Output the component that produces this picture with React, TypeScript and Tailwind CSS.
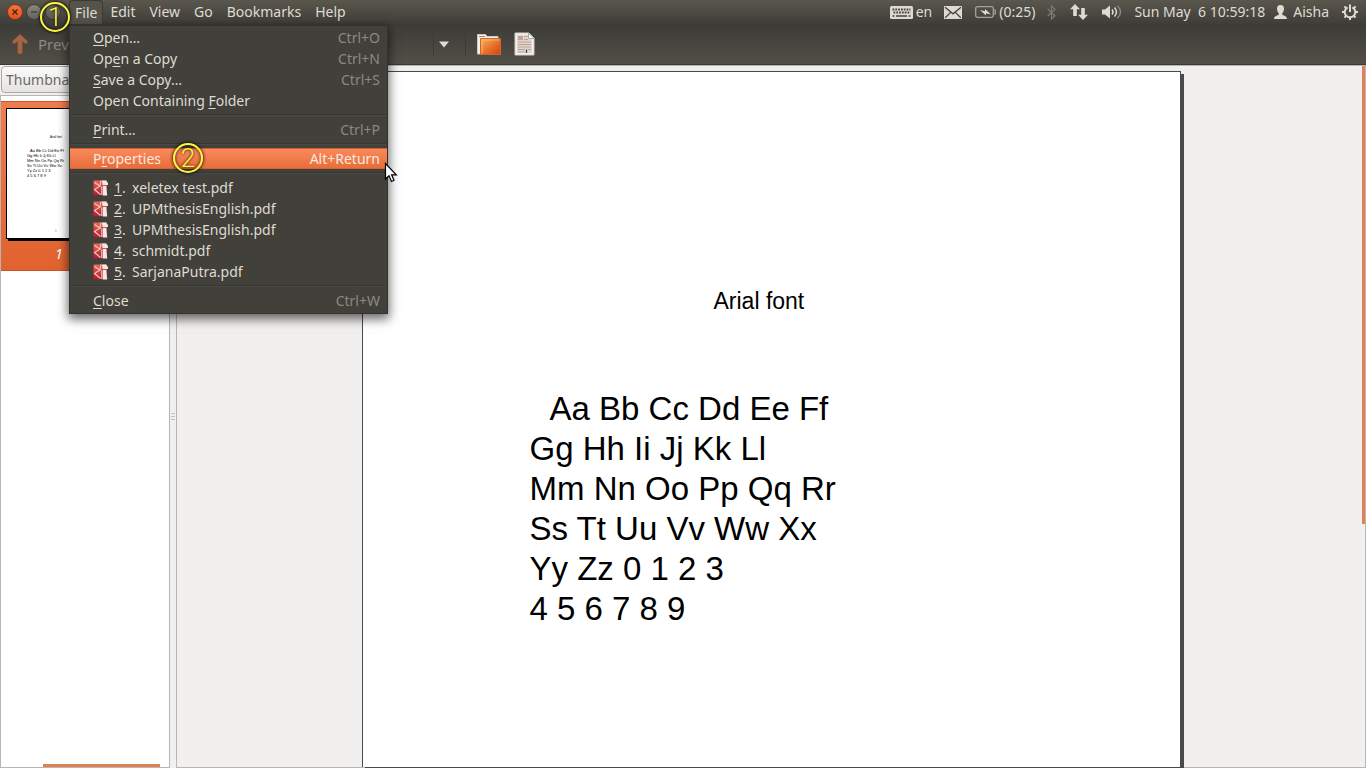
import React from 'react';

interface MenuEntry {
  before?: string;
  key: string;
  after: string;
  shortcut?: string;
  pdf?: boolean;
  active?: boolean;
}

const menuBar = ['File', 'Edit', 'View', 'Go', 'Bookmarks', 'Help'];

const fileMenu: MenuEntry[][] = [
  [
    { key: 'O', after: 'pen…', shortcut: 'Ctrl+O' },
    { before: 'Op', key: 'e', after: 'n a Copy', shortcut: 'Ctrl+N' },
    { key: 'S', after: 'ave a Copy…', shortcut: 'Ctrl+S' },
    { before: 'Open Containing ', key: 'F', after: 'older' },
  ],
  [{ key: 'P', after: 'rint…', shortcut: 'Ctrl+P' }],
  [{ before: 'P', key: 'r', after: 'operties', shortcut: 'Alt+Return', active: true }],
  [
    { key: '1', after: 'xeletex test.pdf', pdf: true },
    { key: '2', after: 'UPMthesisEnglish.pdf', pdf: true },
    { key: '3', after: 'UPMthesisEnglish.pdf', pdf: true },
    { key: '4', after: 'schmidt.pdf', pdf: true },
    { key: '5', after: 'SarjanaPutra.pdf', pdf: true },
  ],
  [{ key: 'C', after: 'lose', shortcut: 'Ctrl+W' }],
];

const sampleLines = [
  'Gg Hh Ii Jj Kk Ll',
  'Mm Nn Oo Pp Qq Rr',
  'Ss Tt Uu Vv Ww Xx',
  'Yy Zz 0 1 2 3',
  '4 5 6 7 8 9',
];

const PdfIcon = () => (
  <svg width="15" height="16" viewBox="0 0 15 16" className="shrink-0">
    <defs>
      <linearGradient id="pdf" x1="0" y1="0" x2="0" y2="1">
        <stop offset="0" stopColor="#ee6a58" />
        <stop offset="1" stopColor="#b3182c" />
      </linearGradient>
    </defs>
    <rect x="0.5" y="0.5" width="13.5" height="15" rx="0.5" fill="url(#pdf)" />
    <path d="M1.500 2.500L7 6L8 0.500M7 6L1.500 9.500L7.500 14.500" fill="none" stroke="#f6c9c4" strokeWidth="1.100" />
    <path d="M8 6l1.500 1V15H8z" fill="#e3a9a9" />
    <path d="M9 0.500h4l2 2.500v2H9.600z" fill="#e9e9e6" />
    <path d="M10 6h3.200l1 9.500H9.800z" fill="#eeeae8" />
  </svg>
);

const KeyboardIcon = () => (
  <svg width="23" height="13" viewBox="0 0 23 13">
    <rect width="23" height="13" rx="1.5" fill="#dfdbd2" />
    <path d="M2.5 3.5h18M3.5 6.5h17" stroke="#45433d" strokeWidth="1.8" strokeDasharray="1.8 1" />
    <path d="M2.5 10h2M6 10h11M18.500 10h2" stroke="#45433d" strokeWidth="1.6" />
  </svg>
);

const MailIcon = () => (
  <svg width="18" height="13" viewBox="0 0 18 13">
    <rect width="18" height="13" rx="0.5" fill="#dfdbd2" />
    <path d="M1 1.200L9 7.800L17 1.200M1.200 11.800L6.400 6.600M16.800 11.800L11.600 6.600" fill="none" stroke="#45433d" strokeWidth="1.3" />
  </svg>
);

const BatteryIcon = () => (
  <svg width="21" height="12" viewBox="0 0 21 12">
    <rect x="0.7" y="0.7" width="17.600" height="10.600" rx="1.800" fill="none" stroke="#a5a29b" strokeWidth="1.3" />
    <path d="M18.500 4h1.800v4h-1.800" fill="none" stroke="#a5a29b" strokeWidth="1.2" />
    <path d="M5 4l5 1.200V3l6 5.500-5-1.200v2.200z" fill="#dfdbd2" />
  </svg>
);

const BluetoothIcon = () => (
  <svg width="9" height="15" viewBox="0 0 9 15">
    <path d="M0.700 4L8 10.800L4.500 14V1L8 4.200L0.700 11" fill="none" stroke="#7d7a73" strokeWidth="1.2" />
  </svg>
);

const NetworkIcon = () => (
  <svg width="18" height="16" viewBox="0 0 18 16">
    <path d="M5 0l5 5.200H6.800V12H3.200V5.200H0z" fill="#dfdbd2" />
    <path d="M13 16l-5-5.200h3.200V4h3.600v6.800H18z" fill="#dfdbd2" />
  </svg>
);

const VolumeIcon = () => (
  <svg width="20" height="14" viewBox="0 0 20 14">
    <path d="M0 4.500h3L8 0.500v13L3 9.500H0z" fill="#dfdbd2" />
    <path d="M10 4.500q2 2.500 0 5M12.500 2.500q4 4.500 0 9" fill="none" stroke="#dfdbd2" strokeWidth="1.5" />
    <path d="M15.500 0.800q6 6.200 0 12.400" fill="none" stroke="#8b8881" strokeWidth="1.4" />
  </svg>
);

const UserIcon = () => (
  <svg width="13" height="14" viewBox="0 0 13 14">
    <path d="M6.500 0C9 0 10 1.500 10 3.800S9 7.500 8.200 8.500v1.200c1 .8 4.800 1 4.800 4.300H0c0-3.300 3.800-3.500 4.800-4.300V8.500C4 7.500 3 6 3 3.800S4 0 6.500 0z" fill="#dfdbd2" />
  </svg>
);

const PowerIcon = () => (
  <svg width="16" height="16" viewBox="0 0 16 16" fill="none" stroke="#dfdbd2">
    <path
      d="M8 13.500V16M2.500 8H0M13.500 8H16M4.100 11.900L2.400 13.600M11.900 11.900L13.600 13.600M4.100 4.100L2.400 2.400M11.900 4.100L13.600 2.400"
      strokeWidth="2"
    />
    <path d="M5.600 3.300A5.300 5.300 0 1 0 10.400 3.300" strokeWidth="2" />
    <path d="M8 0.500V8" strokeWidth="2" />
  </svg>
);

const UpArrow = () => (
  <svg width="18" height="22" viewBox="0 0 18 22">
    <path d="M9 1.200L17 8.500L15 11.200L11.300 8.200V19.500Q11.300 21 9.800 21H8.200Q6.700 21 6.700 19.500V8.200L3 11.200L1 8.500z" fill="#a06a4a" stroke="#8c4c2f" />
  </svg>
);

const FolderIcon = () => (
  <svg width="26" height="24" viewBox="0 0 26 24">
    <defs>
      <linearGradient id="folder" x1="0" y1="0" x2="1" y2="1">
        <stop offset="0" stopColor="#f6b65c" />
        <stop offset="0.5" stopColor="#e8762c" />
        <stop offset="1" stopColor="#d5400c" />
      </linearGradient>
    </defs>
    <path d="M1.500 2.500h8l1.500 2h11v17.500H1.500z" fill="#f4f1ee" stroke="#cfc8c1" />
    <path d="M3 4.500h6" stroke="#c9785a" />
    <path d="M4.500 6.500h20V22.500H4.500z" fill="url(#folder)" stroke="#d0652f" />
    <path d="M6 21.500V8h17" fill="none" stroke="#f7c489" strokeOpacity="0.700" />
  </svg>
);

const DocumentIcon = () => (
  <svg width="22" height="24" viewBox="0 0 22 24">
    <path d="M1 1h14l5 5v17H1z" fill="#f3f1ef" stroke="#d2cecb" />
    <path d="M3 3h11v4h4v14H3z" fill="#e0d6cf" />
    <path d="M14.500 1v5.500H20z" fill="#fff" stroke="#aaa6a2" />
    <path d="M4 4h5v4H4z" fill="#c0a698" />
    <path d="M10 4.500h3.500M10 7.500h4M4 10h13M4 12.500h13M4 15h13M4 17.500h7M4 20h7M14 17.500h3" stroke="#bda395" strokeWidth="1.100" />
    <path d="M12.500 17.500v3.500" stroke="#4a4541" strokeWidth="1.300" />
  </svg>
);

// Yellow numbered ring laid over the screen
const Marker = ({ label }: { label: string }) => (
  <span className="flex size-[30px] items-center justify-center rounded-full border-2 border-[#fcf53c] font-[Roboto,sans-serif] text-[26px] leading-none font-light text-[#fcf53c] shadow-[0_0_3px_1px_#000a,inset_0_0_3px_1px_#0008] [text-shadow:0_0_3px_#000]">
    {label}
  </span>
);

const FileMenu = () => (
  <div className="absolute top-full left-0 z-10 mt-px w-[319px] border border-[#33322d] bg-[#41403a] pt-px pb-[2px] text-[#dfdbd2] shadow-[0_4px_10px_1px_#0009]">
    {fileMenu.map((group, i) => (
      <div key={i}>
        {i > 0 && <div className="my-[3px] h-[2px] border-t border-[#37362f] bg-[#4a4943]" />}
        {group.map(entry => (
          <button
            key={entry.key}
            className={
              entry.active
                ? 'relative flex h-[21px] w-full items-center border-y border-[#d4602f] bg-linear-to-b from-[#f98a5b] to-[#e86d39] pr-[7px] pl-[23px] text-[#fbe9df]'
                : 'flex h-[21px] w-full items-center pr-[7px] pl-[23px]'
            }
          >
            {entry.pdf && <PdfIcon />}
            {entry.pdf ? (
              <>
                <span className="ml-[6px] w-[18px] text-left"><u className="underline-offset-2">{entry.key}</u>.</span>
                <span>{entry.after}</span>
              </>
            ) : (
              <span className="whitespace-pre">{entry.before}<u className="underline-offset-2">{entry.key}</u>{entry.after}</span>
            )}
            {entry.active && (
              <span className="absolute top-[-6px] left-[103px]"><Marker label="2" /></span>
            )}
            {entry.shortcut && (
              <span className={entry.active ? 'ml-auto' : 'ml-auto text-[#8b8982]'}>{entry.shortcut}</span>
            )}
          </button>
        ))}
      </div>
    ))}
    <svg width="14" height="22" viewBox="0 0 14 22" className="absolute top-[136px] left-[314px]">
      <path d="M1.500 1.500V17L5 13.700L7.500 19.500L10 18.300L7.600 12.800H12.300z" fill="#fff" stroke="#000" strokeWidth="1.200" />
    </svg>
  </div>
);

const TopPanel = () => (
  <header className="relative flex h-6 items-center bg-linear-to-b from-[#5a574d] to-[#3e3d38] text-[#dfdbd2]">
    <div className="flex w-[69px] items-center gap-[3px] pl-[7px]">
      <button aria-label="Close window" className="flex size-4 items-center justify-center rounded-full border border-[#8a3512] bg-linear-to-b from-[#f4743f] to-[#e2531b]">
        <svg width="6" height="6" viewBox="0 0 6 6"><path d="M0.500 0.500l5 5M5.500 0.500l-5 5" stroke="#4b1d0b" strokeWidth="1.300" /></svg>
      </button>
      <button aria-label="Minimize window" className="flex size-4 items-center justify-center rounded-full border border-[#3c3b37] bg-linear-to-b from-[#8b887e] to-[#65635b]">
        <svg width="6" height="2" viewBox="0 0 6 2"><path d="M0 1h6" stroke="#3c3b37" strokeWidth="1.300" /></svg>
      </button>
      <button aria-label="Maximize window" className="size-4 rounded-full border border-[#3c3b37] bg-linear-to-b from-[#77746b] to-[#5a5850]" />
    </div>
    <span className="absolute top-[2px] left-10 z-20"><Marker label="1" /></span>
    <nav className="relative flex h-full items-center">
      {menuBar.map(name => (
        <button
          key={name}
          className={
            name === 'File'
              ? 'h-full rounded-t border-x border-t border-[#3a3934] bg-[#55534a] px-[5px]'
              : 'h-full px-[7px]'
          }
        >
          {name}
        </button>
      ))}
      <FileMenu />
    </nav>
    <div className="ml-auto flex items-center pr-2">
      <KeyboardIcon />
      <span className="mr-3 ml-[3px]">en</span>
      <MailIcon />
      <span className="ml-[13px]"><BatteryIcon /></span>
      <span className="mr-3 ml-[3px]">(0:25)</span>
      <BluetoothIcon />
      <span className="mx-[14px]"><NetworkIcon /></span>
      <VolumeIcon />
      <span className="mr-[9px] ml-3 whitespace-pre">Sun May  6 10:59:18</span>
      <UserIcon />
      <span className="mr-[13px] ml-[6px]">Aisha</span>
      <PowerIcon />
    </div>
  </header>
);

const Toolbar = () => (
  <div className="flex h-[41px] items-center border-b border-[#3a3934] bg-linear-to-b from-[#3c3b37] to-[#524f47]">
    <button aria-label="Previous page" className="flex w-[433px] items-center gap-[9px] pl-[11px] text-[15px] text-[#8b8982]">
      <UpArrow />
      Prev
    </button>
    <button aria-label="Zoom" className="flex h-[22px] w-8 items-center border-l border-[#3a3934] pl-[5px]">
      <svg width="10" height="7" viewBox="0 0 10 7"><path d="M0 0.500h10L5 6.500z" fill="#dfdbd2" /></svg>
    </button>
    <div className="flex h-[22px] items-center gap-3 border-l border-[#3a3934] pl-[10px]">
      <button aria-label="Open folder"><FolderIcon /></button>
      <button aria-label="Document"><DocumentIcon /></button>
    </div>
  </div>
);

const Sidebar = () => (
  <aside className="flex w-[170px] flex-col">
    <div className="px-px pt-px">
      <button aria-label="Thumbnails" className="flex h-[27px] w-full items-center rounded-sm border border-[#aaa8a2] bg-linear-to-b from-[#fafafa] to-[#e4e3e1] px-1 text-[#6b6965]">
        Thumbna
      </button>
    </div>
    <div className="relative mt-[2px] flex flex-1 flex-col border border-[#b8b6b0] bg-white pt-[5px]">
      <div className="flex h-[170px] flex-col border-y border-[#c9552a] bg-linear-to-b from-[#f07c4c] to-[#e0622f] px-[5px] pt-[6px]">
        <div className="flex h-[131px] w-[102px] flex-col border border-black bg-white pl-[20px] font-['Liberation_Sans',sans-serif] text-[4px] leading-[5px] text-black shadow-[2px_2px_0_#000]">
          <p className="mt-[26px] ml-[23px] text-[3px]">Arial font</p>
          <p className="mt-2 ml-[3px]">Aa Bb Cc Dd Ee Ff</p>
          {sampleLines.map(line => <p key={line}>{line}</p>)}
          <p className="mt-auto mb-1 ml-7 text-[3px] text-gray-500">1</p>
        </div>
        <span className="mt-[5px] ml-[49px] text-white italic">1</span>
      </div>
      <div className="absolute bottom-0 left-[42px] h-[3px] w-[117px] bg-[#df8058]" />
    </div>
  </aside>
);

const App: React.FC = () => {
  return (
    <div className="flex h-screen flex-col overflow-hidden bg-[#f1f0ee] font-['Noto_Sans',sans-serif] text-sm leading-5">
      <TopPanel />
      <Toolbar />
      <div className="flex min-h-0 flex-1">
        <Sidebar />
        <div className="flex w-[6px] flex-col items-center justify-center gap-[2px]">
          <i className="h-px w-1 bg-[#c4c2bd]" />
          <i className="h-px w-1 bg-[#c4c2bd]" />
          <i className="h-px w-1 bg-[#c4c2bd]" />
        </div>
        <main className="relative flex min-w-0 flex-1 justify-center border border-[#b8b6b0] px-4 pt-[5px]">
          <article className="flex w-[819px] flex-col border border-b-0 border-[#4a4a4a] bg-white px-[167px] pt-[215px] font-['Liberation_Sans',sans-serif] text-black shadow-[3px_3px_0_#4a4a4a]">
            <h1 className="ml-[184px] text-[23px] leading-7">Arial font</h1>
            <div className="mt-[74px] text-[33px] leading-10">
              <p className="ml-5">Aa Bb Cc Dd Ee Ff</p>
              {sampleLines.map(line => <p key={line}>{line}</p>)}
            </div>
          </article>
          <div className="absolute top-0 right-0 h-[458px] w-[3px] bg-[#df8058]" />
        </main>
      </div>
    </div>
  );
};

export default App;
